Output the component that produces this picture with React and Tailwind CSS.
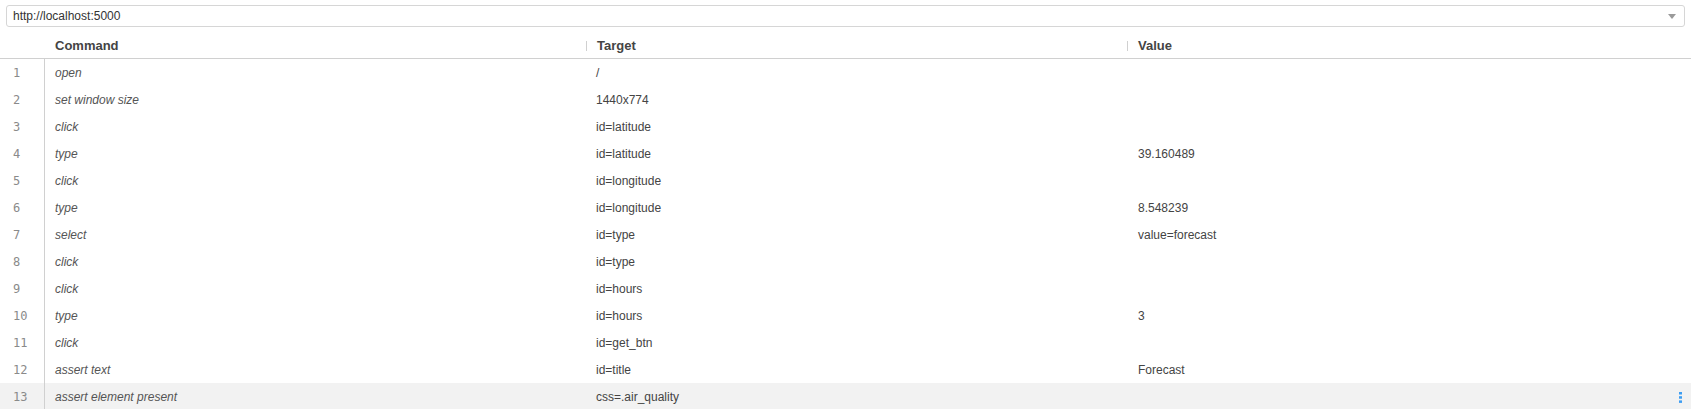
import React from "react";

const rows = [
  ["open", "/", ""],
  ["set window size", "1440x774", ""],
  ["click", "id=latitude", ""],
  ["type", "id=latitude", "39.160489"],
  ["click", "id=longitude", ""],
  ["type", "id=longitude", "8.548239"],
  ["select", "id=type", "value=forecast"],
  ["click", "id=type", ""],
  ["click", "id=hours", ""],
  ["type", "id=hours", "3"],
  ["click", "id=get_btn", ""],
  ["assert text", "id=title", "Forecast"],
  ["assert element present", "css=.air_quality", ""],
];

const App = () => {
  return (
    <div className="h-[409px] w-full overflow-hidden bg-white font-['Liberation_Sans',Arial,sans-serif] text-[12px] text-[#333]">
      <div className="px-[6px] pt-[5px]">
        <div className="relative flex h-[22px] items-center rounded-[3px] border border-[#d6d6d6] bg-white pl-[6px]">
          <span className="text-[12px] text-[#333]">http://localhost:5000</span>
          <svg className="absolute right-[8px] top-[8px]" width="8" height="5" viewBox="0 0 8 5">
            <path d="M0 0h8L4 5z" fill="#9a9a9a" />
          </svg>
        </div>
      </div>

      <div className="mt-[5px] grid h-[27px] grid-cols-[45px_541px_541px_1fr] items-center border-b border-[#d0d0d0] pt-[2px] text-[13px] font-bold text-[#444]">
        <div />
        <div className="pl-[10px]">Command</div>
        <div className="flex items-center">
          <span className="mr-[10px] h-[10px] border-l border-[#d0d0d0]" />
          Target
        </div>
        <div className="flex items-center">
          <span className="mr-[10px] h-[10px] border-l border-[#d0d0d0]" />
          Value
        </div>
      </div>

      <div>
        {rows.map(([cmd, target, value], i) => (
          <div
            key={i}
            className={
              i === rows.length - 1
                ? "relative grid h-[27px] grid-cols-[45px_541px_541px_1fr] items-center bg-[#f2f2f2]"
                : "relative grid h-[27px] grid-cols-[45px_541px_541px_1fr] items-center"
            }
          >
            <div className="flex h-full items-center border-r border-[#d0d0d0] pl-[13px] font-['DejaVu_Sans_Mono',monospace] text-[12px] text-[#8a8a8a]">
              {i + 1}
            </div>
            <div className="pl-[10px] italic text-[#555]">{cmd}</div>
            <div className="pl-[10px] text-[#444]">{target}</div>
            <div className="pl-[11px] text-[#444]">{value}</div>
            {i === rows.length - 1 && (
              <svg className="absolute right-[9px] top-[9px]" width="3" height="11" viewBox="0 0 3 11">
                <rect x="0" y="0" width="3" height="2.5" fill="#3d9df2" />
                <rect x="0" y="4.2" width="3" height="2.5" fill="#3d9df2" />
                <rect x="0" y="8.4" width="3" height="2.5" fill="#3d9df2" />
              </svg>
            )}
          </div>
        ))}
      </div>
    </div>
  );
};

export default App;
